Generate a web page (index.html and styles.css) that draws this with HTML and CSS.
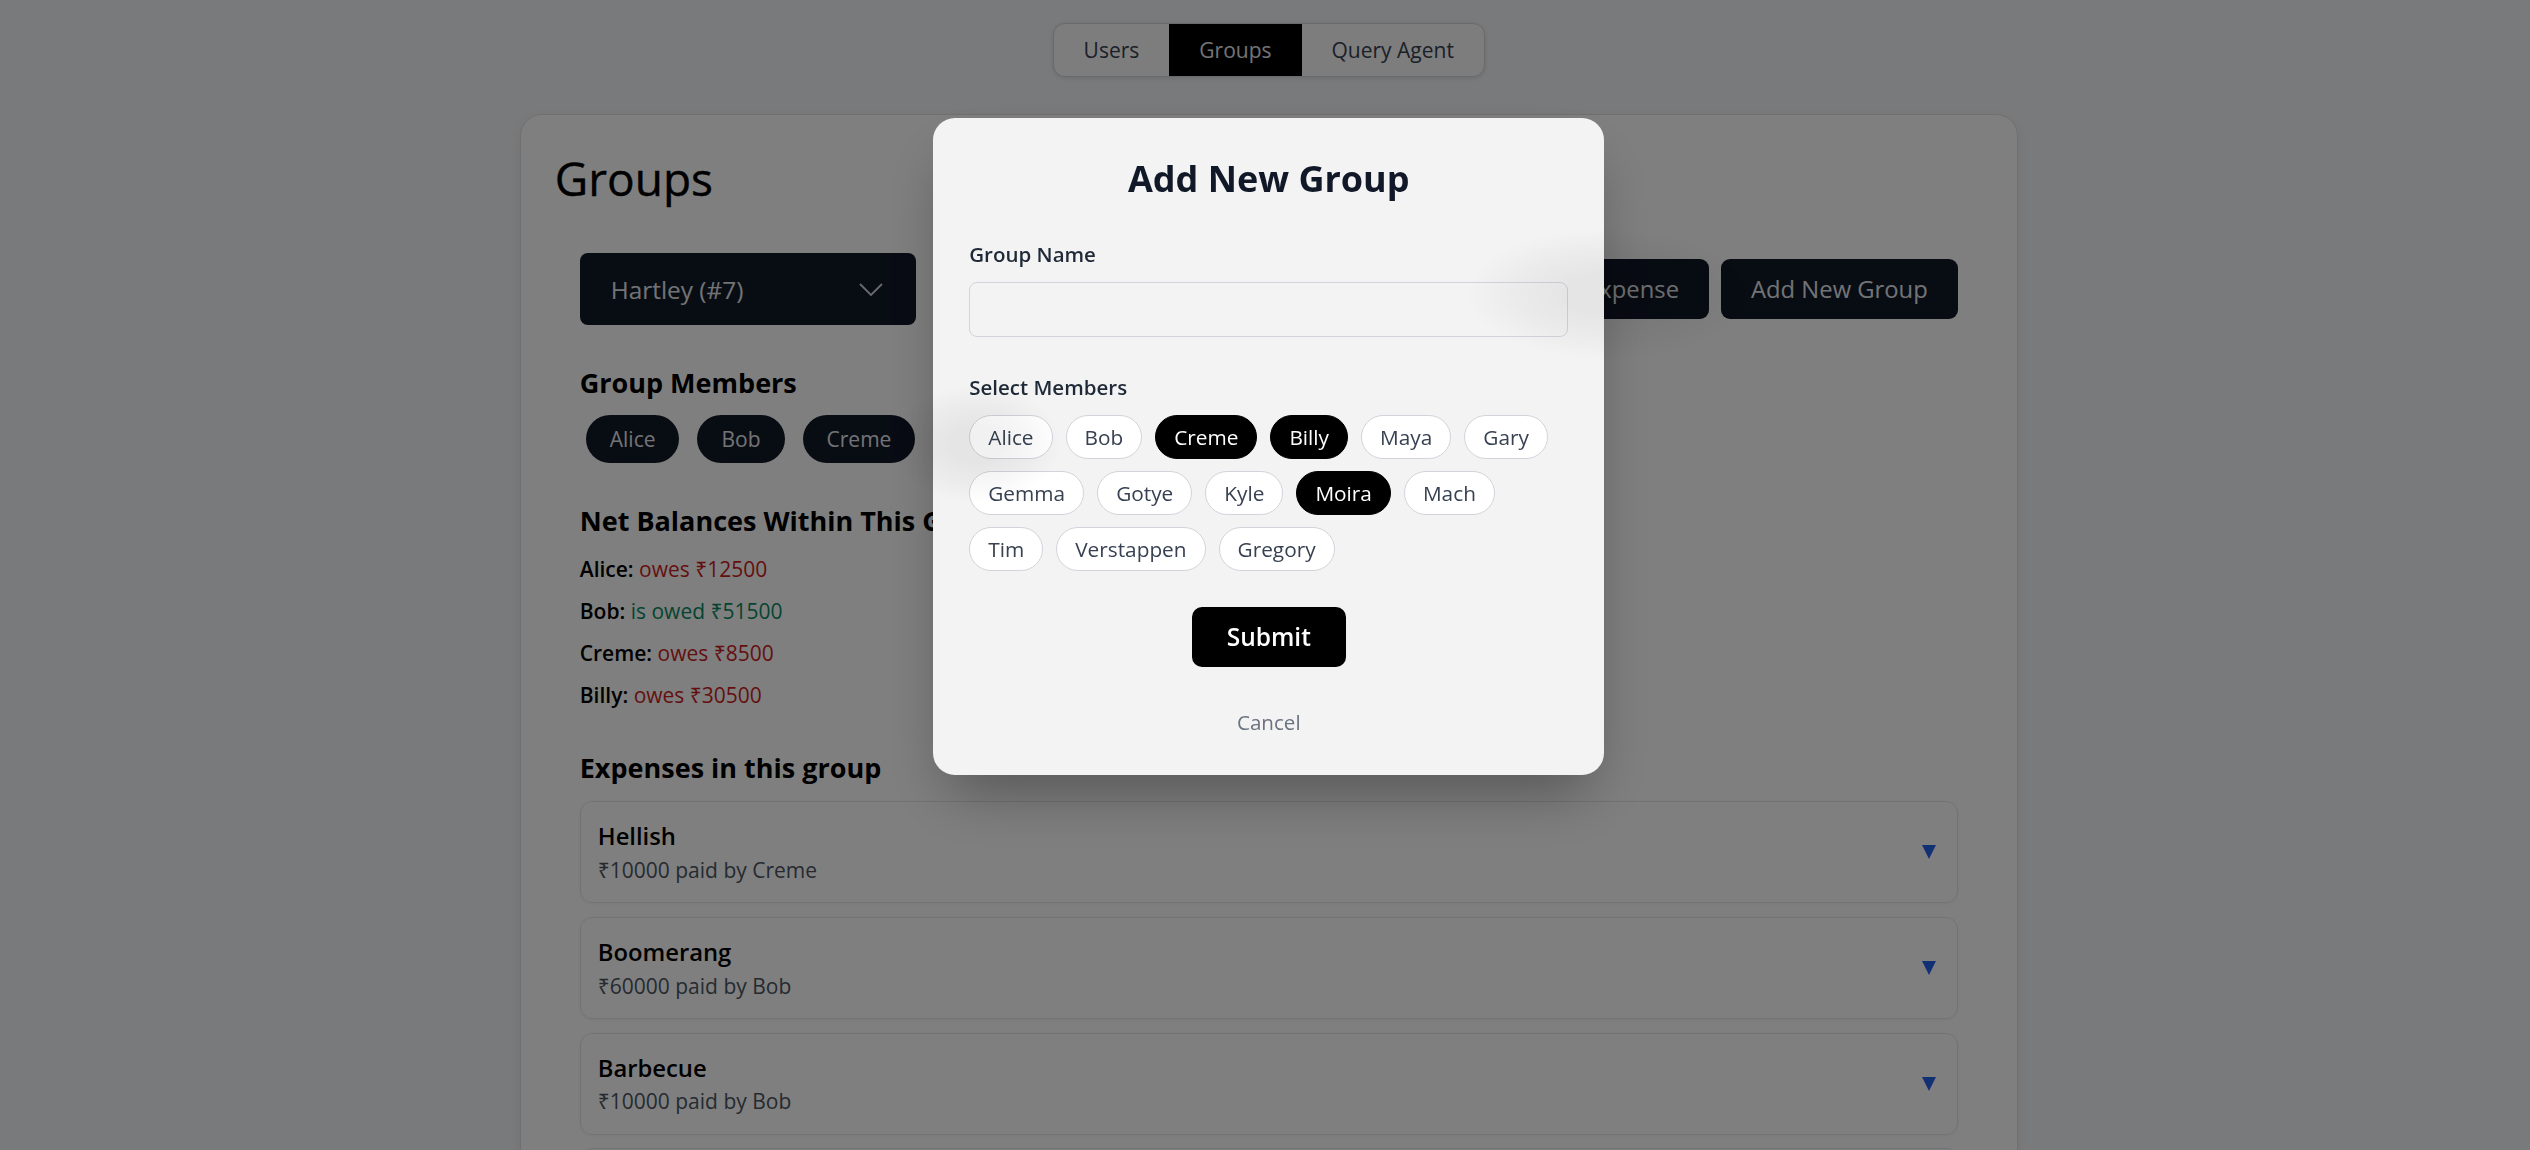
FILE: index.html
```html
<!DOCTYPE html>
<html lang="en">
<head>
<meta charset="utf-8">
<title>Groups</title>
<link rel="stylesheet" href="styles.css">
</head>
<body>
<div class="page">
  <nav class="tabs">
    <button class="tab">Users</button>
    <button class="tab active">Groups</button>
    <button class="tab">Query Agent</button>
  </nav>

  <main class="card">
    <h1 class="card-title">Groups</h1>
    <div class="card-body">
      <div class="toolbar">
        <div class="select">
          <span>Hartley (#7)</span>
          <svg class="chevron" width="24" height="13" viewBox="0 0 24 13"><polyline points="1,1 12,12 23,1" fill="none" stroke="#d1d5db" stroke-width="1.8"/></svg>
        </div>
        <div class="actions">
          <button class="btn ghost-shadow">Add Expense</button>
          <button class="btn">Add New Group</button>
        </div>
      </div>

      <h2 class="section-title">Group Members</h2>
      <div class="chips">
        <span class="chip">Alice</span>
        <span class="chip">Bob</span>
        <span class="chip">Creme</span>
        <span class="chip ghost-shadow">Billy</span>
      </div>

      <h2 class="section-title">Net Balances Within This Group</h2>
      <div class="balances">
        <p class="bal"><span class="who">Alice:</span> <span class="owes">owes ₹12500</span></p>
        <p class="bal"><span class="who">Bob:</span> <span class="owed">is owed ₹51500</span></p>
        <p class="bal"><span class="who">Creme:</span> <span class="owes">owes ₹8500</span></p>
        <p class="bal"><span class="who">Billy:</span> <span class="owes">owes ₹30500</span></p>
      </div>

      <h2 class="section-title expenses-title">Expenses in this group</h2>
      <div class="expenses">
        <div class="expense">
          <div><div class="exp-name">Hellish</div><div class="exp-sub">₹10000 paid by Creme</div></div>
          <svg class="tri" width="14" height="14" viewBox="0 0 14 14"><polygon points="0,0 14,0 7,14" fill="#2563eb"/></svg>
        </div>
        <div class="expense">
          <div><div class="exp-name">Boomerang</div><div class="exp-sub">₹60000 paid by Bob</div></div>
          <svg class="tri" width="14" height="14" viewBox="0 0 14 14"><polygon points="0,0 14,0 7,14" fill="#2563eb"/></svg>
        </div>
        <div class="expense">
          <div><div class="exp-name">Barbecue</div><div class="exp-sub">₹10000 paid by Bob</div></div>
          <svg class="tri" width="14" height="14" viewBox="0 0 14 14"><polygon points="0,0 14,0 7,14" fill="#2563eb"/></svg>
        </div>
        <div class="expense">
          <div><div class="exp-name">Groceries</div><div class="exp-sub">₹2000 paid by Alice</div></div>
          <svg class="tri" width="14" height="14" viewBox="0 0 14 14"><polygon points="0,0 14,0 7,14" fill="#2563eb"/></svg>
        </div>
      </div>
    </div>
  </main>
</div>

<div class="overlay">
  <div class="modal">
    <h2 class="modal-title">Add New Group</h2>
    <label class="field-label" for="gname">Group Name</label>
    <input class="input" id="gname" type="text">
    <div class="field-label sel-label">Select Members</div>
    <div class="pick">
      <span class="pill">Alice</span>
      <span class="pill">Bob</span>
      <span class="pill on">Creme</span>
      <span class="pill on">Billy</span>
      <span class="pill">Maya</span>
      <span class="pill">Gary</span>
      <span class="pill">Gemma</span>
      <span class="pill">Gotye</span>
      <span class="pill">Kyle</span>
      <span class="pill on">Moira</span>
      <span class="pill">Mach</span>
      <span class="pill">Tim</span>
      <span class="pill">Verstappen</span>
      <span class="pill">Gregory</span>
    </div>
    <button class="submit">Submit</button>
    <button class="cancel">Cancel</button>
  </div>
</div>
</body>
</html>
```

FILE: styles.css
```css
* { box-sizing: border-box; }

html, body {
  margin: 0;
  height: 100%;
}

body {
  font-family: "Open Sans", "Noto Sans", sans-serif;
  background: #f3f4f6;
  color: #111827;
  overflow: hidden;
}

button {
  font-family: inherit;
  cursor: pointer;
}

.page {
  padding: 23px 0 0 7.5px;
  display: flex;
  flex-direction: column;
  align-items: center;
}

/* top tabs */
.tabs {
  display: flex;
  height: 54px;
  background: #fafafa;
  border: 1px solid #d1d5db;
  border-radius: 12px;
  overflow: hidden;
  box-shadow: 0 1px 4px rgba(0, 0, 0, 0.12);
}

.tab {
  font-size: 21px;
  line-height: 52px;
  padding: 0 30px;
  color: #374151;
  background: none;
  border: 0;
}

.tab.active {
  background: #000;
  color: #e5e7eb;
}

/* main card */
.card {
  width: 1498px;
  margin-top: 37px;
  background: #fff;
  border: 1px solid #e0e0e0;
  border-radius: 22px;
  padding: 37px 34px 35px;
  box-shadow: 0 4px 12px rgba(0, 0, 0, 0.06);
}

.card-title {
  margin: 0;
  font-size: 46px;
  line-height: 52px;
  font-weight: 400;
  color: #000;
  -webkit-text-stroke: 0.4px #000;
}

.card-body {
  padding: 0 25px;
}

.toolbar {
  margin-top: 49px;
  display: flex;
  justify-content: space-between;
  align-items: center;
}

.select {
  width: 336px;
  height: 72px;
  background: #111827;
  border-radius: 8px;
  display: flex;
  align-items: center;
  justify-content: space-between;
  padding: 0 33px 0 31px;
  color: #e5e7eb;
  font-size: 24.4px;
}

.chevron { display: block; }

.actions {
  display: flex;
  gap: 12px;
}

.btn {
  font-size: 23.8px;
  line-height: 36px;
  padding: 12px 30px;
  background: #111827;
  color: #e5e7eb;
  border: 0;
  border-radius: 9px;
}

.section-title {
  margin: 39px 0 0;
  font-size: 27px;
  line-height: 37px;
  font-weight: 700;
  color: #000;
}

.chips {
  display: flex;
  gap: 18px;
  padding-left: 6px;
  margin-top: 14px;
}

.chip {
  height: 48px;
  line-height: 48px;
  padding: 0 24px;
  border-radius: 999px;
  background: #111827;
  color: #e5e7eb;
  font-size: 21px;
}

/* soft shadows of hidden controls that paint above the modal layer */
.ghost-shadow { position: relative; }
.ghost-shadow::after {
  content: "";
  position: absolute;
  inset: -30px -40px -40px;
  border-radius: 50%;
  background: radial-gradient(closest-side, rgba(0, 0, 0, 0.055) 30%, rgba(0, 0, 0, 0.03) 65%, rgba(0, 0, 0, 0) 100%);
  z-index: 60;
  pointer-events: none;
}

.balances {
  margin-top: 14.5px;
  display: flex;
  flex-direction: column;
  gap: 10.5px;
}

.bal {
  margin: 0;
  font-size: 21px;
  line-height: 31.5px;
}

.who { font-weight: 600; color: #000; }
.owes { color: #c81e1e; }
.owed { color: #0a8a5f; }

.expenses-title { margin-top: 37.5px; }

.expenses {
  margin-top: 15.5px;
  display: flex;
  flex-direction: column;
  gap: 13.5px;
}

.expense {
  border: 1px solid #e5e7eb;
  border-radius: 12px;
  padding: 16px 21px 16px 17px;
  display: flex;
  align-items: center;
  justify-content: space-between;
  box-shadow: 0 1px 3px rgba(0, 0, 0, 0.06);
}

.exp-name {
  font-size: 23.8px;
  line-height: 36.75px;
  font-weight: 600;
  color: #000;
}

.exp-sub {
  font-size: 21px;
  line-height: 31.5px;
  color: #4b5563;
}

.tri { display: block; }

/* modal */
.overlay {
  position: fixed;
  inset: 0;
  z-index: 50;
  background: rgba(0, 0, 0, 0.5);
  display: flex;
  justify-content: center;
  align-items: flex-start;
  padding: 118px 0 0 7.5px;
}

.modal {
  width: 671px;
  background: #f3f3f3;
  border-radius: 22px;
  padding: 37px 36px 39px;
  box-shadow: 0 30px 60px -15px rgba(0, 0, 0, 0.35);
  display: flex;
  flex-direction: column;
}

.modal-title {
  margin: 0;
  font-size: 36px;
  line-height: 48px;
  font-weight: 700;
  text-align: center;
  color: #111827;
}

.field-label {
  display: block;
  margin-top: 37px;
  font-size: 20.5px;
  line-height: 28px;
  font-weight: 600;
  color: #1f2937;
}

.sel-label { margin-top: 36.2px; }

.input {
  margin-top: 13.8px;
  height: 55px;
  width: 100%;
  border: 1px solid #d1d5db;
  border-radius: 8px;
  background: transparent;
}

.pick {
  margin-top: 13.8px;
  display: flex;
  flex-wrap: wrap;
  gap: 12px 13px;
}

.pill {
  height: 44px;
  line-height: 42px;
  padding: 0 18px;
  border: 1px solid #d1d5db;
  border-radius: 999px;
  background: #fff;
  color: #374151;
  font-size: 20.8px;
}

.pill.on {
  background: #000;
  border-color: #000;
  color: #fff;
}

.submit {
  align-self: center;
  margin-top: 36px;
  height: 60px;
  padding: 0 35px;
  background: #000;
  color: #fff;
  font-size: 24.5px;
  font-weight: 600;
  border: 0;
  border-radius: 10px;
}

.cancel {
  align-self: center;
  margin-top: 41px;
  padding: 0;
  font-size: 20.6px;
  line-height: 28px;
  color: #6b7280;
  background: none;
  border: 0;
}
```
